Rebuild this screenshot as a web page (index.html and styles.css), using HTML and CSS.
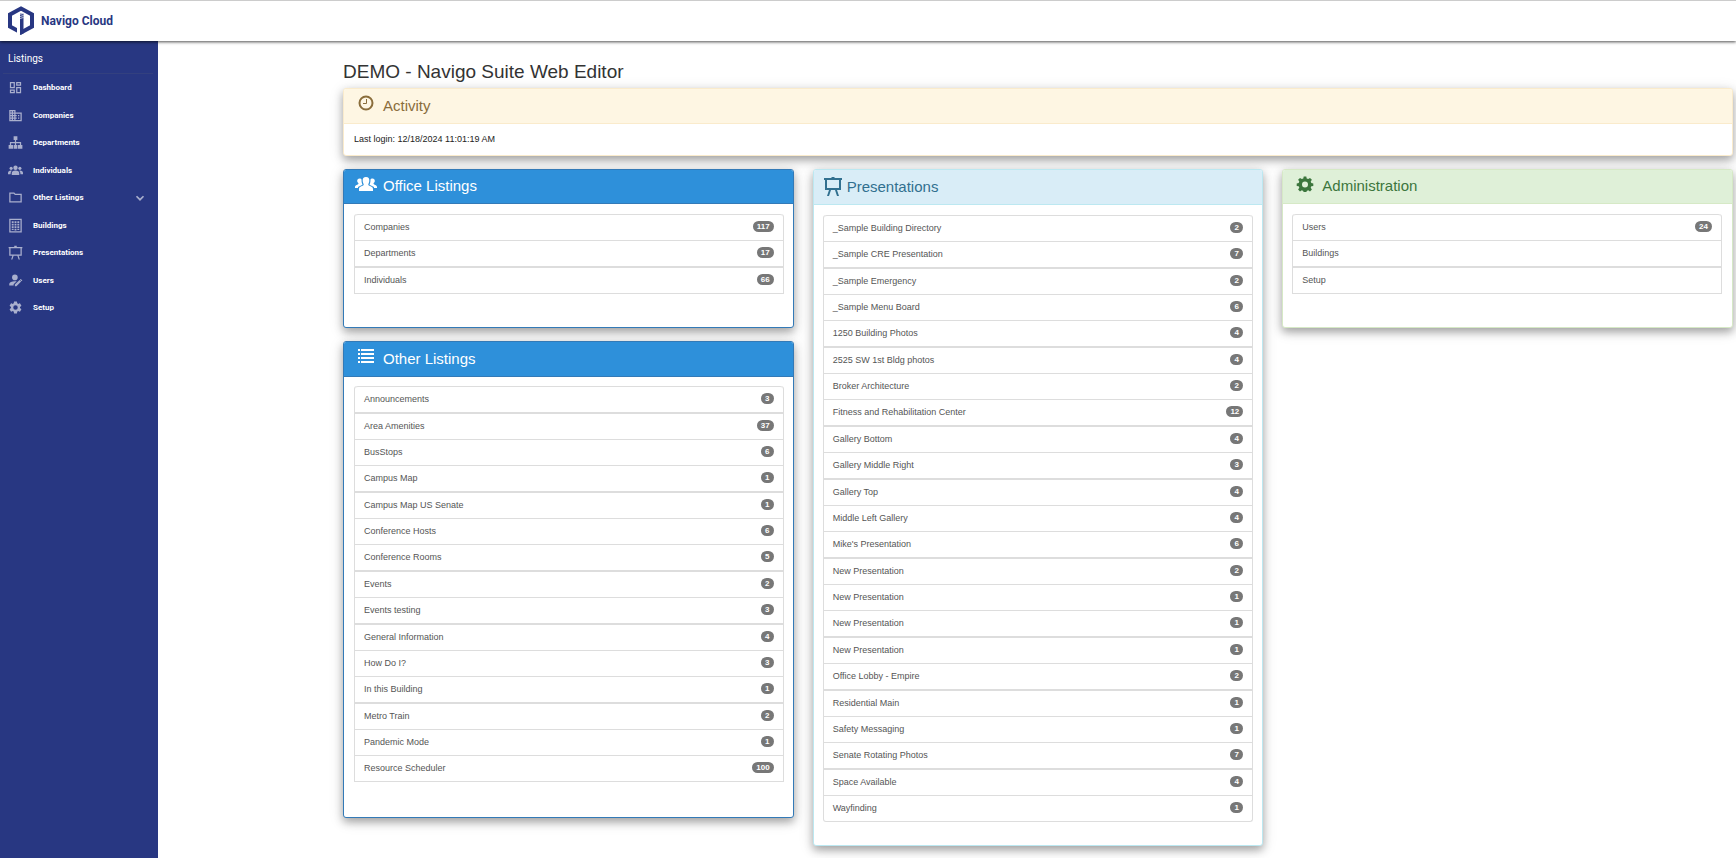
FILE: index.html
```html
<!DOCTYPE html>
<html lang="en">
<head>
<meta charset="utf-8">
<title>Navigo Cloud</title>
<link rel="stylesheet" href="styles.css">
</head>
<body>
<header class="topbar">
  <svg class="logo" viewBox="0 0 26 29" aria-hidden="true">
    <path class="logo-ring" d="M13 2.500 24 8.500V20.500L13 26.500 2 20.500V8.500Z"/>
    <path class="logo-gap" d="M10.500 8V28"/>
    <path class="logo-fill" d="M12 7.500H15.500V27.500L12 29Z"/>
    <path class="logo-lines" d="M11 8.500 15.500 7.500M12 10.500 15.500 9.500M12 12.500 15.500 11.500"/>
  </svg>
  <span class="brand">Navigo Cloud</span>
</header>
<div class="shell">
  <nav class="sidebar" aria-label="Listings">
    <h2 class="sidebar-title">Listings</h2>
    <ul class="menu">
      <li><a href="#"><svg viewBox="0 0 24 24"><path d="M19 5v2h-4V5h4M9 5v6H5V5h4m10 8v6h-4v-6h4M9 17v2H5v-2h4M21 3h-8v6h8V3zM11 3H3v10h8V3zm10 8h-8v10h8V11zm-10 4H3v6h8v-6z"/></svg>Dashboard</a></li>
      <li><a href="#"><svg viewBox="0 0 24 24"><path d="M12 7V3H2v18h20V7H12zM6 19H4v-2h2v2zm0-4H4v-2h2v2zm0-4H4V9h2v2zm0-4H4V5h2v2zm4 12H8v-2h2v2zm0-4H8v-2h2v2zm0-4H8V9h2v2zm0-4H8V5h2v2zm10 12h-8v-2h2v-2h-2v-2h2v-2h-2V9h8v10zm-2-8h-2v2h2v-2zm0 4h-2v2h2v-2z"/></svg>Companies</a></li>
      <li><a href="#"><svg viewBox="0 0 24 24"><path d="M9 2h6v6h-2v3h8v5h2v6h-7v-6h3v-3h-6v3h2v6H9v-6h2v-3H5v3h3v6H1v-6h2v-5h8V8H9z"/></svg>Departments</a></li>
      <li><a href="#"><svg viewBox="0 0 24 24"><circle cx="12" cy="7.500" r="3.500"/><circle cx="5" cy="8.500" r="2.500"/><circle cx="19" cy="8.500" r="2.500"/><path d="M6 19v-3q0-4 6-4t6 4v3zM0 18v-2q0-4 5-4l1 .3Q4 14 4 18zM24 18v-2q0-4-5-4l-1 .3q2 1.700 2 5.700z"/></svg>Individuals</a></li>
      <li><a href="#"><svg viewBox="0 0 24 24"><path d="M9.170 6l2 2H20v10H4V6h5.170M10 4H2v16h20V6H12l-2-2z"/></svg>Other Listings<svg class="chevron" viewBox="0 0 24 24"><path d="M7 8 12 13l5-5 2 2-7 7-7-7z"/></svg></a></li>
      <li><a href="#"><svg viewBox="0 0 24 24"><path fill-rule="evenodd" d="M2 1h20v22H2zM4 3v18h16V3zM6 5h3v3H6zm4.500 0h3v3h-3zM15 5h3v3h-3zM6 9h3v3H6zm4.500 0h3v3h-3zM15 9h3v3h-3zM6 13h3v3H6zm4.500 0h3v3h-3zM15 13h3v3h-3zM6 17h3v2H6zm4.500 0h3v3h-3zM15 17h3v2h-3z"/></svg>Buildings</a></li>
      <li><a href="#"><svg viewBox="0 0 24 24"><path fill-rule="evenodd" d="M10 1h4v2h9v2h-1v12h-5l2 6h-2l-2-6H9l-2 6H5l2-6H2V5H1V3h9zM4 5v10h16V5z"/></svg>Presentations</a></li>
      <li><a href="#"><svg viewBox="0 0 24 24"><circle cx="11" cy="7" r="4.500"/><path d="M2 20v-3q1-4 9-4l3 .3L9 18v2zM11 21v-2.500l7.500-7.500 2.500 2.500-7.500 7.500zM21.500 13 19 10.500l1.500-1L23 12z"/></svg>Users</a></li>
      <li><a href="#"><svg viewBox="0 0 24 24"><path d="M19.140 12.940c.040-.3.060-.61.060-.94 0-.32-.020-.64-.070-.94l2.030-1.580c.18-.14.23-.41.120-.61l-1.920-3.320c-.12-.22-.37-.29-.59-.22l-2.390.96c-.5-.38-1.030-.7-1.620-.94l-.36-2.540c-.040-.24-.24-.41-.48-.41h-3.840c-.24 0-.43.17-.47.41l-.36 2.540c-.59.24-1.130.57-1.620.94l-2.390-.96c-.22-.080-.47 0-.59.22L2.740 8.870c-.12.21-.080.47.120.61l2.030 1.580c-.050.3-.090.63-.090.94s.020.64.070.94l-2.030 1.580c-.18.14-.23.41-.12.61l1.920 3.320c.12.22.37.29.59.22l2.390-.96c.5.38 1.030.7 1.620.94l.36 2.540c.050.24.24.41.48.41h3.840c.24 0 .44-.17.47-.41l.36-2.540c.59-.24 1.130-.56 1.620-.94l2.390.96c.22.080.47 0 .59-.22l1.920-3.320c.12-.22.070-.47-.12-.61l-2.010-1.580zM12 15.600a3.600 3.600 0 1 1 0-7.200 3.600 3.600 0 0 1 0 7.200z"/></svg>Setup</a></li>
    </ul>
  </nav>
  <main class="content">
    <h1 class="page-title">DEMO - Navigo Suite Web Editor</h1>
    <section class="panel panel-warning">
      <h3 class="panel-heading"><svg viewBox="0 0 24 16"><circle cx="12" cy="8" r="6.500" fill="none" stroke="currentColor" stroke-width="2"/><path d="M12.500 4v4.500H9" fill="none" stroke="currentColor"/></svg>Activity</h3>
      <p class="panel-text">Last login: 12/18/2024 11:01:19 AM</p>
    </section>
    <div class="columns">
      <div class="column">
        <section class="panel panel-primary">
          <h3 class="panel-heading"><svg viewBox="0 0 24 16"><path d="M12 1c2.500 0 3.500 1.500 3.300 4-.2 2-1 2.700-1 3.800 0 1.200 4.700 1.500 4.700 4.200v2H5v-2c0-2.700 4.700-3 4.700-4.200 0-1.100-.8-1.800-1-3.800C8.500 2.500 9.500 1 12 1zM5.500 2.500c1 0 1.800.3 2 1 0 3 .5 4 1 5.200L4 11v1H1v-1c0-2 3.500-2.400 3.500-3.300S3.200 6.600 3.200 5s.8-2.500 2.300-2.500zM18.500 2.500c-1 0-1.800.3-2 1 0 3-.5 4-1 5.200L20 11v1h3v-1c0-2-3.500-2.400-3.500-3.300s1.300-1.100 1.300-2.700-.8-2.500-2.300-2.500z"/></svg>Office Listings</h3>
          <ul class="list">
            <li><a href="#">Companies<span class="badge">117</span></a></li>
            <li><a href="#">Departments<span class="badge">17</span></a></li>
            <li><a href="#">Individuals<span class="badge">66</span></a></li>
          </ul>
        </section>
        <section class="panel panel-primary">
          <h3 class="panel-heading heading-tall"><svg viewBox="0 0 24 16"><path d="M4 1h2v2H4zM7 1h13v2H7zM4 5h2v2H4zM7 5h13v2H7zM4 9h2v2H4zM7 9h13v2H7zM4 13h2v2H4zM7 13h13v2H7z"/></svg>Other Listings</h3>
          <ul class="list list-offset">
            <li><a href="#">Announcements<span class="badge">3</span></a></li>
            <li><a href="#">Area Amenities<span class="badge">37</span></a></li>
            <li><a href="#">BusStops<span class="badge">6</span></a></li>
            <li><a href="#">Campus Map<span class="badge">1</span></a></li>
            <li><a href="#">Campus Map US Senate<span class="badge">1</span></a></li>
            <li><a href="#">Conference Hosts<span class="badge">6</span></a></li>
            <li><a href="#">Conference Rooms<span class="badge">5</span></a></li>
            <li><a href="#">Events<span class="badge">2</span></a></li>
            <li><a href="#">Events testing<span class="badge">3</span></a></li>
            <li><a href="#">General Information<span class="badge">4</span></a></li>
            <li><a href="#">How Do I?<span class="badge">3</span></a></li>
            <li><a href="#">In this Building<span class="badge">1</span></a></li>
            <li><a href="#">Metro Train<span class="badge">2</span></a></li>
            <li><a href="#">Pandemic Mode<span class="badge">1</span></a></li>
            <li><a href="#">Resource Scheduler<span class="badge">100</span></a></li>
          </ul>
        </section>
      </div>
      <section class="panel panel-info">
        <h3 class="panel-heading heading-tall"><svg class="board" viewBox="0 0 18 19"><path fill-rule="evenodd" d="M8 0h2l1 1h7v2h-1v10h-4l2 6h-2l-2-6H7l-2 6H3l2-6H1V3H0V1h7zM3 3v8h12V3z"/></svg>Presentations</h3>
        <ul class="list list-rounded">
          <li><a href="#">_Sample Building Directory<span class="badge">2</span></a></li>
          <li><a href="#">_Sample CRE Presentation<span class="badge">7</span></a></li>
          <li><a href="#">_Sample Emergency<span class="badge">2</span></a></li>
          <li><a href="#">_Sample Menu Board<span class="badge">6</span></a></li>
          <li><a href="#">1250 Building Photos<span class="badge">4</span></a></li>
          <li><a href="#">2525 SW 1st Bldg photos<span class="badge">4</span></a></li>
          <li><a href="#">Broker Architecture<span class="badge">2</span></a></li>
          <li><a href="#">Fitness and Rehabilitation Center<span class="badge">12</span></a></li>
          <li><a href="#">Gallery Bottom<span class="badge">4</span></a></li>
          <li><a href="#">Gallery Middle Right<span class="badge">3</span></a></li>
          <li><a href="#">Gallery Top<span class="badge">4</span></a></li>
          <li><a href="#">Middle Left Gallery<span class="badge">4</span></a></li>
          <li><a href="#">Mike's Presentation<span class="badge">6</span></a></li>
          <li><a href="#">New Presentation<span class="badge">2</span></a></li>
          <li><a href="#">New Presentation<span class="badge">1</span></a></li>
          <li><a href="#">New Presentation<span class="badge">1</span></a></li>
          <li><a href="#">New Presentation<span class="badge">1</span></a></li>
          <li><a href="#">Office Lobby - Empire<span class="badge">2</span></a></li>
          <li><a href="#">Residential Main<span class="badge">1</span></a></li>
          <li><a href="#">Safety Messaging<span class="badge">1</span></a></li>
          <li><a href="#">Senate Rotating Photos<span class="badge">7</span></a></li>
          <li><a href="#">Space Available<span class="badge">4</span></a></li>
          <li><a href="#">Wayfinding<span class="badge">1</span></a></li>
        </ul>
      </section>
      <section class="panel panel-success">
        <h3 class="panel-heading"><svg viewBox="0 0 24 16"><path fill-rule="evenodd" d="M10.700.5h2.600l.4 2 1.500.6 1.800-1.200 1.900 1.900-1.200 1.800.6 1.500 2 .4v2.400l-2 .4-.6 1.500 1.200 1.800-1.900 1.900-1.800-1.200-1.500.6-.4 2h-2.600l-.4-2-1.500-.6L7 15.500l-1.900-1.900 1.200-1.800-.6-1.500-2-.4V7.500l2-.4.6-1.500L5.100 3.800 7 1.900l1.800 1.200 1.500-.6zM12 5.400a3 3 0 1 0 0 6 3 3 0 0 0 0-6z"/></svg>Administration</h3>
        <ul class="list">
          <li><a href="#">Users<span class="badge">24</span></a></li>
          <li><a href="#">Buildings</a></li>
          <li><a href="#">Setup</a></li>
        </ul>
      </section>
    </div>
  </main>
</div>
</body>
</html>
```
FILE: styles.css
```css
* { box-sizing: border-box; }
body {
  margin: 0;
  min-height: 100vh;
  display: flex;
  flex-direction: column;
  background: #fff;
  color: #333;
  font-family: "Liberation Sans", Arial, sans-serif;
  font-size: 9px;
}
h1, h2, h3, p, ul { margin: 0; padding: 0; font-weight: 400; }
ul { list-style: none; }
a { color: inherit; text-decoration: none; }
svg { fill: currentColor; flex: none; }

.topbar {
  position: relative;
  z-index: 1;
  height: 41px;
  display: flex;
  align-items: center;
  gap: 7px;
  padding: 0 8px 2px;
  border-top: 1px solid #ccc;
  background: #fff;
  box-shadow: 0 1px 3px rgba(0, 0, 0, .7);
}
.logo { width: 26px; height: 29px; }
.logo-ring { fill: none; stroke: #283782; stroke-width: 4; }
.logo-fill { fill: #283782; }
.logo-gap { fill: none; stroke: #fff; stroke-width: 3; }
.logo-lines { fill: none; stroke: #fff; stroke-width: 1; opacity: .7; }
.brand {
  color: #283782;
  font: 700 12px/16px Roboto, sans-serif;
  padding-top: 2px;
}

.shell { flex: 1; display: flex; }
.sidebar {
  width: 158px;
  flex: none;
  background: #283782;
  color: #fff;
  font-family: Roboto, sans-serif;
}
.sidebar-title {
  margin: 0 5px 0 3px;
  padding: 10px 5px 7px;
  border-bottom: 1px solid #33407f;
  font-size: 10px;
  line-height: 15px;
}
.menu a {
  height: 27px;
  display: flex;
  align-items: center;
  gap: 10px;
  padding: 0 11px 0 8px;
  font-size: 8px;
  font-weight: 700;
}
.menu li:nth-child(even) a { height: 28px; }
.menu svg { width: 15px; height: 15px; color: #a9afcd; }
.menu .chevron { width: 14px; height: 14px; margin-left: auto; }

.content { flex: 1; min-width: 0; padding: 19px 3px 13px 185px; }
.page-title { font-size: 19px; line-height: 24px; margin-bottom: 4px; }
.panel {
  border: 1px solid;
  border-radius: 3px;
  background: #fff;
  box-shadow: 0 4px 8px rgba(0, 0, 0, .3), 0 3px 16px rgba(0, 0, 0, .12);
}
.panel-heading {
  display: flex;
  align-items: center;
  gap: 5px;
  height: 34px;
  padding: 0 10px 2px;
  border-bottom: 1px solid;
  border-radius: 2px 2px 0 0;
  font-size: 15px;
}
.panel-heading svg { width: 24px; height: 16px; margin-bottom: 4px; }
.panel-heading .board { width: 18px; height: 19px; margin-bottom: 0; }
.heading-tall { height: 35px; }
.panel-text { padding: 10px; line-height: 11px; color: #222; }
.panel-warning { border-color: #faebcc; margin-bottom: 13px; }
.panel-warning .panel-heading { height: 35px; background: #fef6e3; border-color: #faebcc; color: #8a6d3b; }
.panel-primary { border-color: #337ab7; }
.panel-primary .panel-heading { background: #2e90da; border-color: #337ab7; color: #fff; }
.panel-info { border-color: #bce8f1; }
.panel-info .panel-heading { background: #d9edf7; border-color: #bce8f1; color: #31708f; }
.panel-success { border-color: #d6e9c6; }
.panel-success .panel-heading { background: #dff0d8; border-color: #d6e9c6; color: #3c763d; }

.columns {
  display: grid;
  grid-template-columns: repeat(3, minmax(0, 1fr));
  gap: 19px;
  align-items: start;
}
.column { display: grid; gap: 13px; }

.list {
  margin: 10px 9px 33px 10px;
  border: 1px solid #ddd;
  border-top: 0;
  border-radius: 3px 3px 0 0;
  color: #555;
}
.list-offset { margin-top: 9px; margin-bottom: 35px; }
.list-rounded { border-radius: 3px; margin-left: 9px; margin-bottom: 23px; }
.panel-success .list { margin-left: 9px; margin-right: 10px; }
.list a {
  display: flex;
  align-items: center;
  justify-content: space-between;
  height: 26px;
  padding: 0 9px 2px;
  border-top: 1px solid #ddd;
}
.list li:first-child a { border-radius: 3px 3px 0 0; }
.list:not(.list-offset) li:nth-child(8n+3) a,
.list:not(.list-offset) li:nth-child(8n+6) a,
.list:not(.list-offset) li:nth-child(8n+9) a,
.list-offset li:nth-child(8n+2) a,
.list-offset li:nth-child(8n+5) a,
.list-offset li:nth-child(8n+8) a { height: 27px; border-top-width: 2px; }
.badge {
  min-width: 13px;
  padding: 0 4px;
  border-radius: 6px;
  background: #777;
  color: #fff;
  font-size: 8px;
  line-height: 11px;
  font-weight: 700;
  text-align: center;
}
```
